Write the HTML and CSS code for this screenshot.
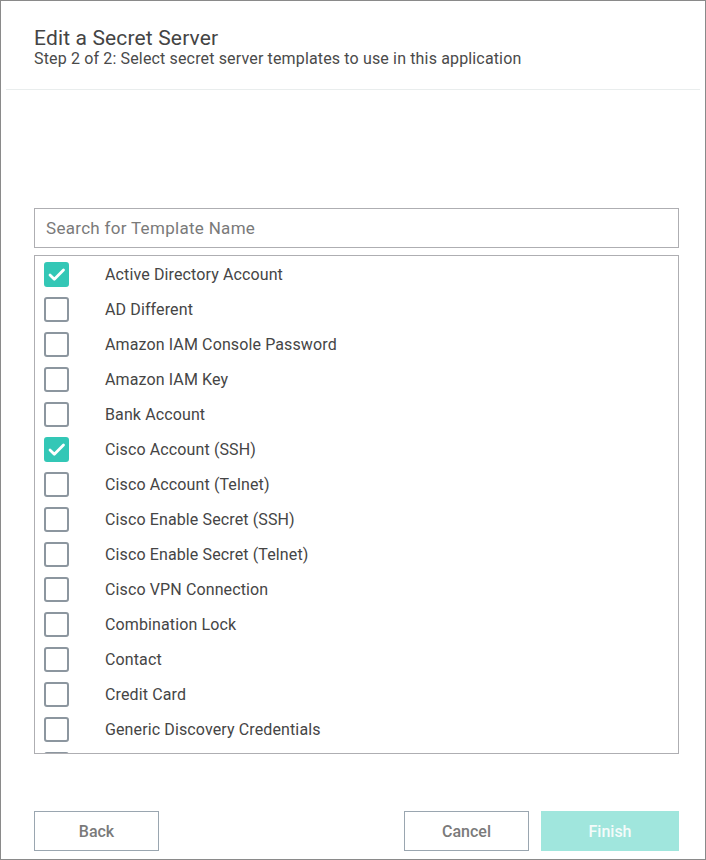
FILE: index.html
```html
<!DOCTYPE html>
<html>
<head>
<meta charset="utf-8">
<link rel="stylesheet" href="styles.css">
</head>
<body>
<div class="dialog">
  <div class="header">
    <div class="title">Edit a Secret Server</div>
    <div class="subtitle">Step 2 of 2: Select secret server templates to use in this application</div>
  </div>
  <div class="divider"></div>
  <div class="content">
    <div class="search">Search for Template Name</div>
    <div class="list">
      <div class="row"><span class="cb checked"><svg viewBox="0 0 25 25" width="25" height="25"><path d="M6 13l4.3 4.3L19.5 8" fill="none" stroke="#fff" stroke-width="2.8" stroke-linecap="round" stroke-linejoin="round"/></svg></span><span class="label">Active Directory Account</span></div>
      <div class="row"><span class="cb"></span><span class="label">AD Different</span></div>
      <div class="row"><span class="cb"></span><span class="label">Amazon IAM Console Password</span></div>
      <div class="row"><span class="cb"></span><span class="label">Amazon IAM Key</span></div>
      <div class="row"><span class="cb"></span><span class="label">Bank Account</span></div>
      <div class="row"><span class="cb checked"><svg viewBox="0 0 25 25" width="25" height="25"><path d="M6 13l4.3 4.3L19.5 8" fill="none" stroke="#fff" stroke-width="2.8" stroke-linecap="round" stroke-linejoin="round"/></svg></span><span class="label">Cisco Account (SSH)</span></div>
      <div class="row"><span class="cb"></span><span class="label">Cisco Account (Telnet)</span></div>
      <div class="row"><span class="cb"></span><span class="label">Cisco Enable Secret (SSH)</span></div>
      <div class="row"><span class="cb"></span><span class="label">Cisco Enable Secret (Telnet)</span></div>
      <div class="row"><span class="cb"></span><span class="label">Cisco VPN Connection</span></div>
      <div class="row"><span class="cb"></span><span class="label">Combination Lock</span></div>
      <div class="row"><span class="cb"></span><span class="label">Contact</span></div>
      <div class="row"><span class="cb"></span><span class="label">Credit Card</span></div>
      <div class="row"><span class="cb"></span><span class="label">Generic Discovery Credentials</span></div>
      <div class="row"><span class="cb"></span></div>
    </div>
  </div>
  <div class="footer">
    <button class="btn">Back</button>
    <div class="spacer"></div>
    <button class="btn">Cancel</button>
    <button class="btn primary">Finish</button>
  </div>
</div>
</body>
</html>
```
FILE: styles.css
```css
* { box-sizing: border-box; }
html, body { margin: 0; padding: 0; background: #fff; }
body { font-family: Roboto, "Liberation Sans", sans-serif; color: #444; letter-spacing: 0.2px; }
.dialog {
  width: 706px;
  height: 860px;
  border: 1px solid #8a8a8a;
  display: flex;
  flex-direction: column;
}
.header { padding: 25px 0 0 33px; height: 88px; }
.title { font-size: 21px; line-height: 24px; color: #444; letter-spacing: 0.15px; }
.subtitle { font-size: 16px; line-height: 18px; color: #4a4a4a; letter-spacing: 0.15px; }
.divider { height: 1px; background: #e9eded; margin: 0 5px; }
.content { padding: 118px 26px 0 33px; }
.search {
  height: 40px;
  border: 1px solid #aeaeb2;
  padding: 0 11px;
  font-size: 17px;
  line-height: 38px;
  color: #7a7a7a;
  letter-spacing: 0.3px;
}
.list {
  margin-top: 7px;
  height: 499px;
  border: 1px solid #aeaeb2;
  overflow: hidden;
  padding-top: 1px;
}
.row {
  height: 35px;
  display: flex;
  align-items: center;
  padding-left: 9px;
}
.cb {
  width: 25px;
  height: 25px;
  border: 2px solid #8c969f;
  border-radius: 3px;
  flex: none;
  position: relative;
}
.cb.checked { background: #33c7b6; border-color: #33c7b6; }
.cb svg { position: absolute; left: -2px; top: -2px; display: block; }
.label { margin-left: 36px; font-size: 16px; color: #454545; letter-spacing: 0.12px; }
.footer {
  margin-top: auto;
  display: flex;
  padding: 0 26px 8px 33px;
  gap: 12px;
}
.spacer { flex: 1; }
.btn {
  height: 40px;
  width: 125px;
  border: 1px solid #9aa6b0;
  background: #fff;
  font-family: Roboto, "Liberation Sans", sans-serif;
  font-weight: 500;
  font-size: 16px;
  color: #7a7a7a;
  padding: 0;
}
.btn.primary {
  width: 138px;
  background: #a0e6dd;
  border-color: #a0e6dd;
  color: #f4fbfa;
}
```
